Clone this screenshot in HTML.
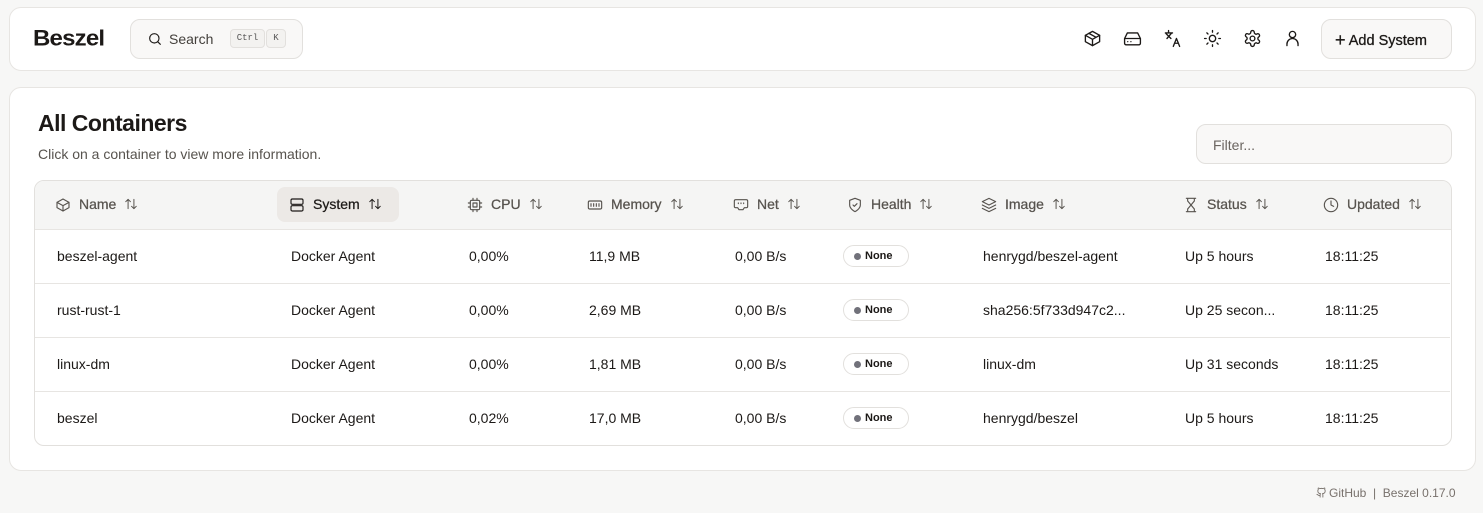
<!DOCTYPE html>
<html><head><meta charset="utf-8"><style>
*{box-sizing:border-box;margin:0;padding:0}
body{width:1483px;height:513px;background:#f7f7f6;font-family:"Liberation Sans",sans-serif;color:#1c1917;position:relative;overflow:hidden}
.card{position:absolute;background:#fff;border:1px solid #e7e5e2;border-radius:12px}
.abs{position:absolute}
svg{position:absolute;fill:none;stroke:currentColor;stroke-width:1.7;stroke-linecap:round;stroke-linejoin:round}
.th{position:absolute;top:196px;font-size:14px;color:#57534e;white-space:nowrap;-webkit-text-stroke:0.25px currentColor}
.th svg.ar{position:relative;display:inline-block;vertical-align:-2px;margin-left:8px;width:14px;height:14px;-webkit-text-stroke:0}
.td{position:absolute;font-size:14px;color:#1c1917;white-space:nowrap}
.badge{position:absolute;left:843px;width:66px;height:22px;border:1px solid #e2e0dd;border-radius:11px;font-size:11px;font-weight:bold;padding-left:21px;line-height:20px}
.badge:before{content:"";position:absolute;left:10px;top:7px;width:7px;height:7px;border-radius:50%;background:#71717a}
.row{position:absolute;left:35px;width:1415px;border-top:1px solid #e7e5e2}
</style></head><body>
<div class="card" style="left:9px;top:7px;width:1467px;height:64px"></div>
<div class="abs" style="left:33px;top:25px;font-size:24px;font-weight:900;letter-spacing:-0.8px;transform:scaleY(0.92)">Beszel</div>
<div class="abs" style="left:130px;top:19px;width:173px;height:40px;border:1px solid #e2e0dd;border-radius:10px;background:#f9f8f7"></div>
<svg style="left:147px;top:31px" width="16" height="16" viewBox="0 0 24 24"><circle cx="11" cy="11" r="7"/><path d="m20 20-4-4"/></svg>
<div class="abs" style="left:169px;top:31px;font-size:14px;color:#44403c">Search</div>
<div class="abs" style="left:230px;top:29px;width:35px;height:19px;border:1px solid #e2e0dd;border-radius:4px;background:#f3f2f0;font:9px 'Liberation Mono',monospace;text-align:center;line-height:17px;color:#555">Ctrl</div>
<div class="abs" style="left:266px;top:29px;width:20px;height:19px;border:1px solid #e2e0dd;border-radius:4px;background:#f3f2f0;font:9px 'Liberation Mono',monospace;text-align:center;line-height:17px;color:#555">K</div>
<svg style="left:1083px;top:29px" width="19" height="19" viewBox="0 0 24 24"><path d="M21 8 12 3 3 8v8l9 5 9-5z"/><path d="M3 8l9 5 9-5M12 13v8M7.5 5.5l9 5"/></svg>
<svg style="left:1123px;top:29px" width="19" height="19" viewBox="0 0 24 24"><path d="M22 12H2M5.5 5h13L22 12v6a2 2 0 0 1-2 2H4a2 2 0 0 1-2-2v-6zM6 16h.01M10 16h.01"/></svg>
<svg style="left:1163px;top:29px" width="19" height="19" viewBox="0 0 24 24"><path d="M3 5h9M7 2v3M5 12l6-7M4 6l6 6M13 22l4-10 4 10M14.5 18h5"/></svg>
<svg style="left:1203px;top:29px" width="19" height="19" viewBox="0 0 24 24"><circle cx="12" cy="12" r="4"/><path d="M12 2v2M12 20v2M4.9 4.9l1.4 1.4M17.7 17.7l1.4 1.4M2 12h2M20 12h2M6.3 17.7l-1.4 1.4M19.1 4.9l-1.4 1.4"/></svg>
<svg style="left:1243px;top:29px" width="19" height="19" viewBox="0 0 24 24"><path d="M12.2 2h-.4a2 2 0 0 0-2 2v.2a2 2 0 0 1-1 1.7l-.4.3a2 2 0 0 1-2 0l-.2-.1a2 2 0 0 0-2.7.7l-.2.4a2 2 0 0 0 .7 2.7l.2.1a2 2 0 0 1 1 1.7v.5a2 2 0 0 1-1 1.7l-.2.1a2 2 0 0 0-.7 2.7l.2.4a2 2 0 0 0 2.7.7l.2-.1a2 2 0 0 1 2 0l.4.3a2 2 0 0 1 1 1.7V20a2 2 0 0 0 2 2h.4a2 2 0 0 0 2-2v-.2a2 2 0 0 1 1-1.7l.4-.3a2 2 0 0 1 2 0l.2.1a2 2 0 0 0 2.7-.7l.2-.4a2 2 0 0 0-.7-2.7l-.2-.1a2 2 0 0 1-1-1.7v-.5a2 2 0 0 1 1-1.7l.2-.1a2 2 0 0 0 .7-2.7l-.2-.4a2 2 0 0 0-2.7-.7l-.2.1a2 2 0 0 1-2 0l-.4-.3a2 2 0 0 1-1-1.7V4a2 2 0 0 0-2-2z"/><circle cx="12" cy="12" r="3"/></svg>
<svg style="left:1283px;top:29px" width="19" height="19" viewBox="0 0 24 24"><circle cx="12" cy="7" r="4"/><path d="M5 21v-2a7 7 0 0 1 14 0v2"/></svg>
<div class="abs" style="left:1321px;top:19px;width:131px;height:40px;border:1px solid #e2e0dd;border-radius:10px;background:#f9f8f7"></div>
<div class="abs" style="left:1335px;top:29px;font-size:14.5px;color:#1c1917;-webkit-text-stroke:0.3px #1c1917"><span style="font-size:18px;position:relative;top:1px">+</span> Add System</div>

<div class="card" style="left:9px;top:87px;width:1467px;height:384px"></div>
<div class="abs" style="left:38px;top:110px;font-size:23px;font-weight:bold;letter-spacing:-0.5px">All Containers</div>
<div class="abs" style="left:38px;top:146px;font-size:14px;color:#57534e">Click on a container to view more information.</div>
<div class="abs" style="left:1196px;top:124px;width:256px;height:40px;border:1px solid #e2e0dd;border-radius:10px;background:#f9f8f7;font-size:14px;color:#6b6560;padding:12px 16px">Filter...</div>

<div class="abs" style="left:34px;top:180px;width:1418px;height:266px;border:1px solid #e2e0dd;border-radius:10px;overflow:hidden">
<div style="height:49px;background:#f5f5f4;border-bottom:1px solid #e7e5e2"></div></div>
<div class="abs" style="left:277px;top:187px;width:122px;height:35px;border-radius:8px;background:#ece9e6"></div>
<svg style="left:55px;top:197px;color:#57534e" width="16" height="16" viewBox="0 0 24 24"><path d="M21 8 12 3 3 8v8l9 5 9-5z"/><path d="M3 8l9 5 9-5M12 13v8"/></svg>
<div class="th" style="left:79px">Name<svg class="ar" viewBox="0 0 24 24"><path d="M7 20V4M3 8l4-4 4 4M17 4v16M13 16l4 4 4-4"/></svg></div>
<svg style="left:289px;top:197px" width="16" height="16" viewBox="0 0 24 24"><rect x="3" y="3" width="18" height="8" rx="2"/><rect x="3" y="13" width="18" height="8" rx="2"/></svg>
<div class="th" style="left:313px;color:#1c1917">System<svg class="ar" viewBox="0 0 24 24"><path d="M7 20V4M3 8l4-4 4 4M17 4v16M13 16l4 4 4-4"/></svg></div>
<svg style="left:467px;top:197px;color:#57534e" width="16" height="16" viewBox="0 0 24 24"><rect x="5" y="5" width="14" height="14" rx="2"/><rect x="9" y="9" width="6" height="6"/><path d="M9 2v3M15 2v3M9 19v3M15 19v3M2 9h3M2 15h3M19 9h3M19 15h3"/></svg>
<div class="th" style="left:491px">CPU<svg class="ar" viewBox="0 0 24 24"><path d="M7 20V4M3 8l4-4 4 4M17 4v16M13 16l4 4 4-4"/></svg></div>
<svg style="left:587px;top:197px;color:#57534e" width="16" height="16" viewBox="0 0 24 24"><rect x="2" y="6" width="20" height="12" rx="2"/><path d="M6 10v4M10 10v4M14 10v4M18 10v4"/></svg>
<div class="th" style="left:611px">Memory<svg class="ar" viewBox="0 0 24 24"><path d="M7 20V4M3 8l4-4 4 4M17 4v16M13 16l4 4 4-4"/></svg></div>
<svg style="left:733px;top:197px;color:#57534e" width="16" height="16" viewBox="0 0 24 24"><path d="M4 4h16a2 2 0 0 1 2 2v8a2 2 0 0 1-2 2h-3l-2 3H9l-2-3H4a2 2 0 0 1-2-2V6a2 2 0 0 1 2-2zM8 9v1M12 9v1M16 9v1"/></svg>
<div class="th" style="left:757px">Net<svg class="ar" viewBox="0 0 24 24"><path d="M7 20V4M3 8l4-4 4 4M17 4v16M13 16l4 4 4-4"/></svg></div>
<svg style="left:847px;top:197px;color:#57534e" width="16" height="16" viewBox="0 0 24 24"><path d="M12 22s8-4 8-10V5l-8-3-8 3v7c0 6 8 10 8 10z"/><path d="m9 12 2 2 4-4"/></svg>
<div class="th" style="left:871px">Health<svg class="ar" viewBox="0 0 24 24"><path d="M7 20V4M3 8l4-4 4 4M17 4v16M13 16l4 4 4-4"/></svg></div>
<svg style="left:981px;top:197px;color:#57534e" width="16" height="16" viewBox="0 0 24 24"><path d="m12 2 10 5-10 5L2 7z"/><path d="m2 12 10 5 10-5M2 17l10 5 10-5"/></svg>
<div class="th" style="left:1005px">Image<svg class="ar" viewBox="0 0 24 24"><path d="M7 20V4M3 8l4-4 4 4M17 4v16M13 16l4 4 4-4"/></svg></div>
<svg style="left:1183px;top:197px;color:#57534e" width="16" height="16" viewBox="0 0 24 24"><path d="M5 2h14M5 22h14M17 2v4l-5 6 5 6v4M7 2v4l5 6-5 6v4"/></svg>
<div class="th" style="left:1207px">Status<svg class="ar" viewBox="0 0 24 24"><path d="M7 20V4M3 8l4-4 4 4M17 4v16M13 16l4 4 4-4"/></svg></div>
<svg style="left:1323px;top:197px;color:#57534e" width="16" height="16" viewBox="0 0 24 24"><circle cx="12" cy="12" r="10"/><path d="M12 6v6l4 2"/></svg>
<div class="th" style="left:1347px">Updated<svg class="ar" viewBox="0 0 24 24"><path d="M7 20V4M3 8l4-4 4 4M17 4v16M13 16l4 4 4-4"/></svg></div>

<div class="row" style="top:283px"></div><div class="row" style="top:337px"></div><div class="row" style="top:391px"></div>

<div class="td" style="left:57px;top:248px">beszel-agent</div><div class="td" style="left:291px;top:248px">Docker Agent</div><div class="td" style="left:469px;top:248px">0,00%</div><div class="td" style="left:589px;top:248px">11,9 MB</div><div class="td" style="left:735px;top:248px">0,00 B/s</div><div class="badge" style="top:245px">None</div><div class="td" style="left:983px;top:248px">henrygd/beszel-agent</div><div class="td" style="left:1185px;top:248px">Up 5 hours</div><div class="td" style="left:1325px;top:248px">18:11:25</div>

<div class="td" style="left:57px;top:302px">rust-rust-1</div><div class="td" style="left:291px;top:302px">Docker Agent</div><div class="td" style="left:469px;top:302px">0,00%</div><div class="td" style="left:589px;top:302px">2,69 MB</div><div class="td" style="left:735px;top:302px">0,00 B/s</div><div class="badge" style="top:299px">None</div><div class="td" style="left:983px;top:302px">sha256:5f733d947c2...</div><div class="td" style="left:1185px;top:302px">Up 25 secon...</div><div class="td" style="left:1325px;top:302px">18:11:25</div>

<div class="td" style="left:57px;top:356px">linux-dm</div><div class="td" style="left:291px;top:356px">Docker Agent</div><div class="td" style="left:469px;top:356px">0,00%</div><div class="td" style="left:589px;top:356px">1,81 MB</div><div class="td" style="left:735px;top:356px">0,00 B/s</div><div class="badge" style="top:353px">None</div><div class="td" style="left:983px;top:356px">linux-dm</div><div class="td" style="left:1185px;top:356px">Up 31 seconds</div><div class="td" style="left:1325px;top:356px">18:11:25</div>

<div class="td" style="left:57px;top:410px">beszel</div><div class="td" style="left:291px;top:410px">Docker Agent</div><div class="td" style="left:469px;top:410px">0,02%</div><div class="td" style="left:589px;top:410px">17,0 MB</div><div class="td" style="left:735px;top:410px">0,00 B/s</div><div class="badge" style="top:407px">None</div><div class="td" style="left:983px;top:410px">henrygd/beszel</div><div class="td" style="left:1185px;top:410px">Up 5 hours</div><div class="td" style="left:1325px;top:410px">18:11:25</div>

<svg style="left:1316px;top:487px;color:#78716c;stroke-width:2" width="11" height="11" viewBox="0 0 24 24"><path d="M15 22v-4a5 5 0 0 0-1-3.5c3 0 6-2 6-5.5a4.5 4.5 0 0 0-1-3.5 4.5 4.5 0 0 0 0-3.5s-1 0-3.5 1.5a12 12 0 0 0-7 0C6 2 5 2 5 2a4.5 4.5 0 0 0 0 3.5A4.5 4.5 0 0 0 4 9c0 3.5 3 5.5 6 5.5a5 5 0 0 0-1 3.5v4M9 18c-4.5 2-5-2-7-2"/></svg>
<div class="abs" style="left:1329px;top:486px;font-size:12px;color:#78716c">GitHub &nbsp;|&nbsp; Beszel 0.17.0</div>
</body></html>
